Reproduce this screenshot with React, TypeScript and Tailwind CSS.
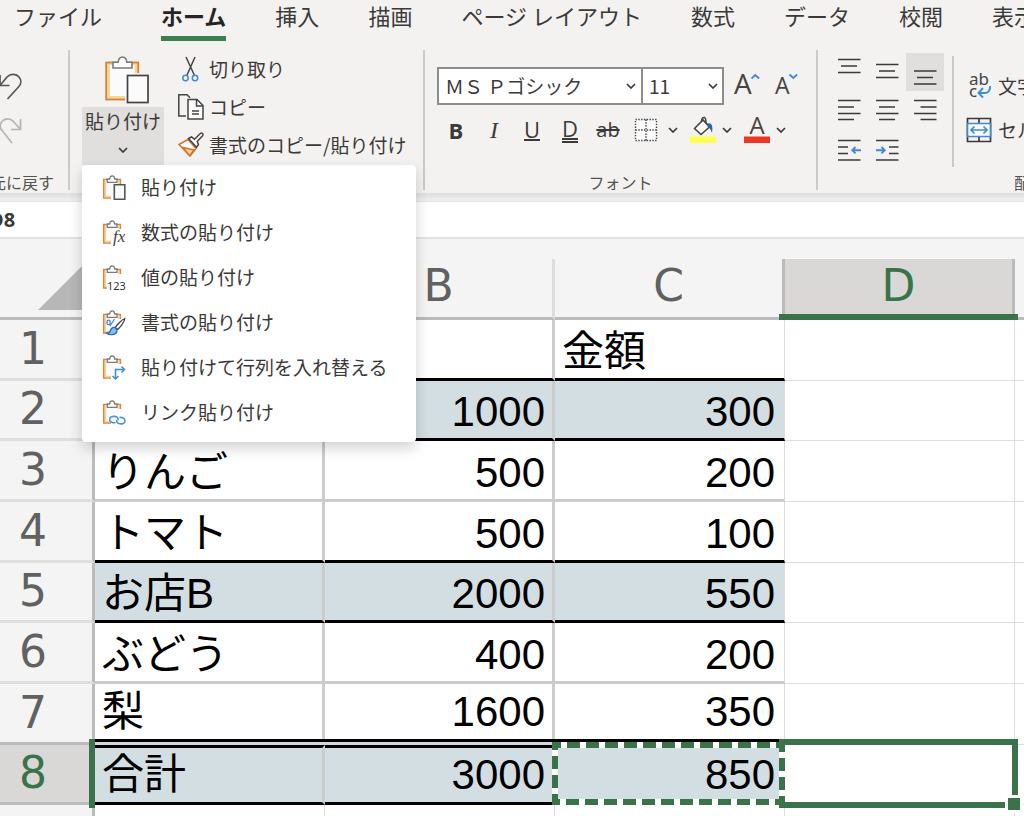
import type { ReactNode } from "react";
import clsx from "clsx";

const TABS = ["ホーム", "挿入", "描画", "ページ レイアウト", "数式", "データ", "校閲", "表示"];

const COLUMNS = [
  { id: "a", label: "" },
  { id: "b", label: "B" },
  { id: "c", label: "C" },
  { id: "d", label: "D" },
  { id: "e", label: "" },
];

type Row = { name: string; price: string; amount: string; kind: "plain" | "shaded" | "total" };

const ROWS: Row[] = [
  { name: "", price: "", amount: "金額", kind: "plain" },
  { name: "", price: "1000", amount: "300", kind: "shaded" },
  { name: "りんご", price: "500", amount: "200", kind: "plain" },
  { name: "トマト", price: "500", amount: "100", kind: "plain" },
  { name: "お店B", price: "2000", amount: "550", kind: "shaded" },
  { name: "ぶどう", price: "400", amount: "200", kind: "plain" },
  { name: "梨", price: "1600", amount: "350", kind: "plain" },
  { name: "合計", price: "3000", amount: "850", kind: "total" },
];

// rows that close with a heavy black rule
const RULED = [1, 2, 4, 5, 8];

function Chevron() {
  return (
    <svg viewBox="0 0 10 6" className="w-[10px] h-[6px]" fill="none" stroke="#3b3a39" strokeWidth="1.7">
      <path d="M1 1l4 4 4-4" />
    </svg>
  );
}

function PasteIcon() {
  return (
    <svg viewBox="0 0 46 50" className="w-[46px] h-[50px]" fill="none">
      <rect x="2.2" y="8.5" width="32" height="37" fill="#f5d898" stroke="#d8803a" strokeWidth="1.8" />
      <rect x="6" y="11" width="24.5" height="31" fill="#fbfbfb" />
      <path d="M21 19h16v30H21z" fill="#f3f2f1" />
      <path d="M21 19h9.5v23H21z" fill="#fbfbfb" />
      <path d="M9 14V8.3h5.2C14.5 5 16 3 18.5 3s4 2 4.3 5.3H28V14z" fill="#fbfbfb" stroke="#7d7b79" strokeWidth="1.6" />
      <rect x="23.5" y="21.5" width="20.5" height="27" fill="#fbfbfb" stroke="#444" strokeWidth="1.7" />
    </svg>
  );
}

function ScissorsIcon() {
  return (
    <svg viewBox="0 0 26 26" className="w-[26px] h-[26px]" fill="none">
      <path d="M8 1l8.5 18.500M17 1L8.800 19.500" stroke="#444" strokeWidth="1.500" />
      <circle cx="7.500" cy="22" r="2.700" stroke="#3f8ad3" strokeWidth="1.500" />
      <circle cx="17" cy="22" r="2.700" stroke="#3f8ad3" strokeWidth="1.500" />
    </svg>
  );
}

function CopyIcon() {
  return (
    <svg viewBox="0 0 26 26" className="w-[26px] h-[26px]" fill="none" stroke="#444" strokeWidth="1.5">
      <path d="M8 22H.8V.8H9l3 3" />
      <path d="M10 5.500h9l6 6V25H10z" fill="#fbfbfb" />
      <path d="M18.500 5.500v6.500H25M14 17h7M14 20h7" />
    </svg>
  );
}

function BrushIcon() {
  return (
    <svg viewBox="0 0 26 26" className="w-[26px] h-[26px]" fill="none">
      <path d="M1 12.500l9-5 8 9-6 7.500z" fill="#fbfbfb" stroke="#d8702e" strokeWidth="1.500" />
      <path d="M5 15.500l11 2.500-4.500 5.500z" fill="#f5d898" stroke="#d8702e" strokeWidth="1.300" />
      <path d="M10.500 6.500l3-1.500 3 2.200L22.300 1.500c1.500-1.200 3.500.6 2.300 2.200L19.200 9.500l1.300 3-2 2.700z" fill="#fbfbfb" stroke="#444" strokeWidth="1.500" />
    </svg>
  );
}

function Clipboard({ children }: { children: ReactNode }) {
  return (
    <svg viewBox="0 0 24 26" className="w-6 h-[26px] shrink-0" fill="none">
      <path d="M4 5.500h13v15H4z" fill="#fafafa" />
      <path d="M5 4.500H1.800v18.500H9M14.500 4.500H18.300V9" stroke="#d9863f" strokeWidth="1.700" />
      <path d="M3.400 5.500v16H9M16.800 5.500V9" stroke="#f5d29a" strokeWidth="1.400" />
      <path d="M5.300 7.300V4h2.400C7.800 1.800 8.700.8 10.200.8s2.400 1 2.500 3.200H15v3.300z" fill="#fff" stroke="#7d7b79" strokeWidth="1.300" />
      {children}
    </svg>
  );
}

const MENU: { label: string; mark: ReactNode }[] = [
  { label: "貼り付け", mark: <path d="M12.300 9.800h10.500v14.400H12.300z" fill="#fafafa" stroke="#555" strokeWidth="1.600" /> },
  {
    label: "数式の貼り付け",
    mark: (
      <text x="11" y="22" fontFamily="Liberation Serif, serif" fontStyle="italic" fontSize="17" fill="#444">
        fx
      </text>
    ),
  },
  {
    label: "値の貼り付け",
    mark: (
      <>
        <path d="M5 15h19v11H5z" fill="#fff" />
        <text x="5" y="25" fontFamily="Noto Sans, sans-serif" fontSize="11" fill="#333">
          123
        </text>
      </>
    ),
  },
  {
    label: "書式の貼り付け",
    mark: (
      <>
        <path d="M12.500 9L8 16M6.600 10.200c1.200 0 1.600 1 1.600 2.200s-.4 2.200-1.600 2.200-1.600-1-1.600-2.200.4-2.200 1.600-2.200z" stroke="#3f8ad3" strokeWidth="1.200" />
        <path d="M22.800 8.500c-3 1-8 6.500-9.500 9l2.200 2c2.500-2 7-7.500 7.300-11z" fill="#fff" stroke="#444" strokeWidth="1.300" />
        <path d="M13 17.500c-3-.5-4 1-4.500 3-.4 1.500-1.500 2.500-4 2.700 2.500 2 9 2.500 10.500-1.700.4-1.500-.5-2.800-2-4z" fill="#8fbbe8" stroke="#2b6cb8" strokeWidth="1.300" />
      </>
    ),
  },
  {
    label: "貼り付けて行列を入れ替える",
    mark: <path d="M13.500 23.500V14.500H22.500M19.500 11.500l3 3-3 3M10.500 21l3 3 3-3" stroke="#3f8ad3" strokeWidth="1.500" />,
  },
  {
    label: "リンク貼り付け",
    mark: (
      <g stroke="#4a94dc" strokeWidth="1.600">
        <path d="M13.500 22.500c-2.500.6-5.800-.3-5.800-3.100s3-3.200 5-3c2.500.2 3.800 1.900 3.300 3.900" />
        <path d="M17.500 17.500c2.500-.5 5.500.6 5.500 3.300s-3 3.300-5 3c-2.500-.3-3.800-1.900-3.200-3.900" />
      </g>
    ),
  },
];

function Lines({ d, arrow }: { d: string; arrow?: string }) {
  return (
    <svg viewBox="0 0 38 38" className="w-[38px] h-[38px]" fill="none" strokeWidth="1.7">
      <path d={d} stroke="#3b3a39" />
      {arrow && <path d={arrow} stroke="#3f8ad3" strokeWidth="1.9" />}
    </svg>
  );
}

const ALIGN = [
  { label: "上揃え", d: "M8 6.500h22.500M11 13h16M8 19.500h22.500" },
  { label: "上下中央揃え", d: "M8 11.500h22.500M11 18h16M8 24.500h22.500" },
  { label: "下揃え", d: "M8 18h22.500M11 24.500h16M8 31h22.500", active: true },
  { label: "左揃え", d: "M8 8.500h22.500M8 15h16M8 21.500h22.500M8 27.500h16" },
  { label: "中央揃え", d: "M8 8.500h22.500M11 15h16M8 21.500h22.500M11 27.500h16" },
  { label: "右揃え", d: "M8 8.500h22.500M14.500 15h16M8 21.500h22.500M14.500 27.500h16" },
  { label: "インデントを減らす", d: "M8 9.500h22.500M8 16h10M8 22.500h10M8 29h22.500", arrow: "M31 19.200h-8.500M25.500 16l-3.200 3.200 3.200 3.200" },
  { label: "インデントを増やす", d: "M8 9.500h22.500M21 16h9.500M21 22.500h9.500M8 29h22.500", arrow: "M8 19.200h8.500M13.500 16l3.200 3.200-3.200 3.200" },
];

function Divider({ className }: { className?: string }) {
  return <div className={clsx("w-[2px] shrink-0 bg-[#cbcac8]", className)} />;
}

function GroupLabel({ children, className }: { children: ReactNode; className?: string }) {
  return <div className={clsx("mt-auto text-base leading-4 text-[#55534f] whitespace-nowrap", className)}>{children}</div>;
}

function FontButton({ label, narrow, children }: { label: string; narrow?: boolean; children: ReactNode }) {
  return (
    <button aria-label={label} className={clsx("h-[38px] flex items-center justify-center", narrow ? "w-8" : "w-[38px]")}>
      {children}
    </button>
  );
}

function MenuArrow({ label }: { label: string }) {
  return (
    <button aria-label={label} className="w-4 h-[38px] flex items-center justify-center">
      <Chevron />
    </button>
  );
}

function FontGroup() {
  return (
    <div className="w-[391px] shrink-0 flex flex-col items-center">
      <div className="w-full pl-3 pt-[17px] flex items-center">
        <div className="flex h-[38px] border-2 border-[#8f8d8b] bg-white">
          <label className="relative flex items-center">
            <select aria-label="フォント" className="appearance-none w-[204px] h-full pl-1.5 text-[19px] leading-6 border-r-2 border-[#8f8d8b]">
              <option>ＭＳ Ｐゴシック</option>
            </select>
            <span className="absolute right-[7px] pointer-events-none flex"><Chevron /></span>
          </label>
          <label className="relative flex items-center">
            <select aria-label="フォント サイズ" className="appearance-none w-[79px] h-full pl-1.5 text-[19px] leading-6">
              <option>11</option>
            </select>
            <span className="absolute right-1 pointer-events-none flex"><Chevron /></span>
          </label>
        </div>
        <button aria-label="フォント サイズの拡大" className="w-[38px] h-[38px] ml-1 flex items-center justify-center">
          <svg viewBox="0 0 32 32" className="w-8 h-8">
            <text x="3" y="24" fontFamily="Open Sans, sans-serif" fontSize="28" fill="#444">A</text>
            <path d="M20.500 8.500l3.800-3.500 3.800 3.500" fill="none" stroke="#3f8ad3" strokeWidth="1.800" />
          </svg>
        </button>
        <button aria-label="フォント サイズの縮小" className="w-[38px] h-[38px] flex items-center justify-center">
          <svg viewBox="0 0 32 32" className="w-8 h-8">
            <text x="6" y="24" fontFamily="Open Sans, sans-serif" fontSize="23" fill="#444">A</text>
            <path d="M20.500 4.500l3.800 3.500 3.800-3.500" fill="none" stroke="#3f8ad3" strokeWidth="1.800" />
          </svg>
        </button>
      </div>
      <div className="w-full pl-3 mt-1.5 flex items-center font-['Open_Sans',sans-serif] text-[22px] leading-6">
        <FontButton label="太字"><b>B</b></FontButton>
        <FontButton label="斜体"><i className="font-['Liberation_Serif',serif] text-2xl leading-6">I</i></FontButton>
        <FontButton label="下線">
          <span className="border-b-2 border-[#3b3a39] leading-5">U</span>
        </FontButton>
        <FontButton label="二重下線">
          <span className="border-b-[5px] border-double border-[#3b3a39] leading-5">D</span>
        </FontButton>
        <FontButton label="取り消し線"><s className="text-xl leading-6">ab</s></FontButton>
        <FontButton label="罫線">
          <svg viewBox="0 0 24 24" className="w-6 h-6" fill="#fbfbfb" stroke="#444" strokeWidth="1.4" strokeDasharray="1.4 1.4">
            <path d="M1.500 1.500h21v21h-21zM12 1.500v21M1.500 12h21" />
          </svg>
        </FontButton>
        <MenuArrow label="罫線のオプション" />
        <span className="w-1.5" />
        <FontButton label="塗りつぶしの色" narrow>
          <svg viewBox="0 0 26 28" className="w-[26px] h-7" fill="none">
            <rect x="0" y="20.500" width="26" height="6.500" fill="#ffff4f" />
            <path d="M4.500 12.500L13 4l6.500 7-8.500 7.500z" fill="#fbfbfb" stroke="#444" strokeWidth="1.600" />
            <path d="M11.500 5.500c0-3 1.500-4.500 3-4s1.500 2.500 1.500 6" stroke="#444" strokeWidth="1.500" />
            <path d="M17.500 7.500c4-1.500 5.800 2 4.500 9.500-1-3-2-5-4.500-6.500z" fill="#2b63b5" />
          </svg>
        </FontButton>
        <MenuArrow label="塗りつぶしのオプション" />
        <span className="w-1.5" />
        <FontButton label="フォントの色" narrow>
          <svg viewBox="0 0 26 28" className="w-[26px] h-7">
            <text x="13" y="18" textAnchor="middle" fontFamily="Open Sans, sans-serif" fontSize="24" fill="#444">A</text>
            <rect x="0" y="20.500" width="26" height="6.500" fill="#ed3524" />
          </svg>
        </FontButton>
        <MenuArrow label="フォントの色のオプション" />
      </div>
      <GroupLabel>フォント</GroupLabel>
    </div>
  );
}

function ClipboardGroup() {
  return (
    <div className="w-[353px] shrink-0 flex pl-3">
      <div className="relative w-[82px] h-[115px] shrink-0">
        <button className="w-full h-full flex flex-col items-center">
          <span className="h-[57px] pt-1 pl-2 flex"><PasteIcon /></span>
          <span className="w-full flex-1 flex flex-col items-center bg-[#e0dfdd] text-[19px] leading-7">
            貼り付け
            <span className="mt-3 flex"><Chevron /></span>
          </span>
        </button>
        <ul className="absolute left-0 top-full z-20 w-[334px] pb-[7px] bg-white rounded-sm shadow-[0_6px_14px_rgba(0,0,0,0.18)]">
          {MENU.map((item) => (
            <li key={item.label}>
              <button className="w-full h-[45px] pl-5 flex items-center gap-[15px] text-[19px] leading-6 whitespace-nowrap">
                <Clipboard>{item.mark}</Clipboard>
                <span className="pb-0.5">{item.label}</span>
              </button>
            </li>
          ))}
        </ul>
      </div>
      <div className="pl-[14px] flex flex-col text-[19px] leading-6 whitespace-nowrap">
        <button className="h-[38px] flex items-center gap-[5px]"><ScissorsIcon />切り取り</button>
        <button className="h-[38px] flex items-center gap-[5px]"><CopyIcon />コピー</button>
        <button className="h-[38px] flex items-center gap-[5px]"><BrushIcon />書式のコピー/貼り付け</button>
      </div>
    </div>
  );
}

function Ribbon() {
  return (
    <div className="relative z-10 flex h-[152px] shrink-0 pt-[9px] pb-[3px] bg-[#f3f2f1]">
      <div className="w-[68px] shrink-0 flex flex-col items-end pr-[14px]">
        <button aria-label="元に戻す" className="mt-[22px] mr-8">
          <svg viewBox="0 0 26 30" className="w-[26px] h-[30px]" fill="none" stroke="#555" strokeWidth="1.7">
            <path d="M4 3v10.500h9.500M4 13.500l7-8.500c4-4 9.500-3 12 0s2.500 7-.5 10L11.500 27" />
          </svg>
        </button>
        <button aria-label="やり直し" className="mt-[14px] mr-8">
          <svg viewBox="0 0 26 30" className="w-[26px] h-[30px]" fill="none" stroke="#b5b4b2" strokeWidth="1.7">
            <path d="M24.500 3v10.500H15M24.500 13.500l-7-8c-4-4-9-3-11.500 0s-2.500 6.500.5 9.500L16 27" />
          </svg>
        </button>
        <GroupLabel>元に戻す</GroupLabel>
      </div>
      <Divider />
      <ClipboardGroup />
      <Divider />
      <FontGroup />
      <Divider />
      <div className="w-[134px] shrink-0 pl-3 pt-[3px]">
        <div className="grid grid-cols-3 gap-y-px w-[114px]">
          {ALIGN.map((a) => (
            <button key={a.label} aria-label={a.label} className={clsx("w-[38px] h-[38px]", a.active && "bg-[#e0dfdd]")}>
              <Lines d={a.d} arrow={a.arrow} />
            </button>
          ))}
        </div>
      </div>
      <Divider className="mt-1.5 mb-[23px]" />
      <div className="flex flex-col pl-3 pt-[14px] text-[19px] leading-6 whitespace-nowrap">
        <button className="h-11 flex items-center gap-1.5">
          <svg viewBox="0 0 26 28" className="w-[26px] h-7 shrink-0" fill="none">
            <text x="3" y="13" fontFamily="Noto Sans, sans-serif" fontSize="17" fill="#444">ab</text>
            <text x="3" y="25" fontFamily="Noto Sans, sans-serif" fontSize="17" fill="#444">c</text>
            <path d="M24 14c.5 4-1.500 7-5 7h-6M17 16l-4.500 5 4.500 4.500" stroke="#3f8ad3" strokeWidth="1.900" />
          </svg>
          文字列の折り返し
        </button>
        <button className="h-11 flex items-center gap-1.5">
          <svg viewBox="0 0 26 26" className="w-[26px] h-[26px] shrink-0" fill="none" strokeWidth="1.7">
            <path d="M1.500 1.500h23v23h-23zM13 1.500v5M13 19.500v5" stroke="#3b3a39" />
            <path d="M1.500 6.500h23v13h-23z" fill="#fbfbfb" stroke="#3f8ad3" />
            <path d="M5 13h16M8.500 9.500L5 13l3.500 3.500M17.500 9.500L21 13l-3.500 3.500" stroke="#3f8ad3" />
          </svg>
          セルの結合
        </button>
        <GroupLabel className="pl-12">配置</GroupLabel>
      </div>
    </div>
  );
}

// dashed outline round the cell that was copied
function CopyOutline() {
  return (
    <svg className="absolute -left-[3px] -top-[6px] w-[233px] h-[63px] z-[2]" fill="none" strokeWidth="6">
      <rect x="3" y="3" width="227" height="57" stroke="#fff" />
      <rect x="3" y="3" width="227" height="57" stroke="#3a734a" strokeDasharray="13 6" strokeDashoffset="7" />
    </svg>
  );
}

function ActiveOutline() {
  return (
    <>
      <span className="absolute -left-[6px] -top-[6px] -right-[4px] -bottom-[4px] border-y-[6px] border-r-[6px] border-[#3a734a]" />
      <span className="absolute -right-[9px] -bottom-[9px] w-[18px] h-[18px] border-[3px] border-white bg-[#3a734a] z-[3]" />
    </>
  );
}

function Sheet() {
  return (
    <table className="table-fixed w-[1245px] border-separate border-spacing-0 bg-white">
      <colgroup>
        <col className="w-[95px]" />
        {COLUMNS.map((c) => <col key={c.id} className="w-[230px]" />)}
      </colgroup>
      <thead className="font-['DejaVu_Sans',sans-serif] text-[44px] leading-none text-[#616161]">
        <tr>
          <th className="h-[61px] p-0 bg-[#f4f4f4] border-b-[3px] border-[#bbbbbb]">
            <svg viewBox="0 0 95 58" className="block w-[95px] h-[58px]">
              <path d="M38 51L88 1v50z" fill="#b7b7b7" />
            </svg>
          </th>
          {COLUMNS.map((c) => (
            <th
              key={c.id}
              scope="col"
              className={clsx(
                "relative h-[61px] p-0 pb-1 font-normal border-b-[3px] border-b-[#bbbbbb] border-r-[3px]",
                c.id === "d" ? "bg-[#d9d8d6] text-[#3a734a]" : "bg-[#f4f4f4]",
                c.id === "c" || c.id === "d" ? "border-r-[#bbbbbb]" : "border-r-[#dddddd]"
              )}
            >
              {c.label}
              {c.id === "d" && <span className="absolute -left-[6px] -right-[6px] -bottom-[3px] h-[6px] bg-[#3a734a] z-[3]" />}
            </th>
          ))}
        </tr>
      </thead>
      <tbody className="font-['Liberation_Sans','Noto_Sans_CJK_JP',sans-serif] text-[42px] leading-none text-black">
        {ROWS.map((row, i) => {
          const n = i + 1;
          const total = row.kind === "total";
          const cell = clsx(
            "relative p-0 px-[7px] whitespace-nowrap",
            n === 2 || n === 5 || n === 8 ? "h-[60px]" : "h-[61px]",
            n < 7 && "pt-[5px]",
            n === 7 && "pb-[3px]",
            row.kind !== "plain" && "bg-[#d3dee2]",
            total && "border-t-[3px] border-t-black shadow-[0_-3px_0_#d3d7e0,0_-6px_0_#000]",
            "border-b-[3px]",
            RULED.includes(n) ? "border-b-black" : "border-b-[#cccccc]"
          );
          return (
            <tr key={n}>
              <th
                scope="row"
                className={clsx(
                  "relative p-0 pr-[45px] pb-px text-right font-normal font-['DejaVu_Sans',sans-serif] text-[44px] border-r-[3px] border-r-[#bbbbbb] border-b-[3px]",
                  total ? "bg-[#d9d8d6] text-[#3a734a]" : "bg-[#f4f4f4] text-[#616161]",
                  n >= 7 ? "border-b-[#bbbbbb]" : "border-b-[#dedede]"
                )}
              >
                {n}
                {total && <span className="absolute -right-[3px] -top-[6px] -bottom-[6px] w-[6px] bg-[#3a734a] z-[3]" />}
              </th>
              <td className={clsx(cell, "border-r-[3px] border-r-[#cccccc]")}>{row.name}</td>
              <td className={clsx(cell, "border-r-[3px] border-r-[#cccccc] text-right")}>{row.price}</td>
              <td className={clsx(cell, "pr-[9px] border-r border-r-[#dcdcdc]", n > 1 && "text-right")}>
                {row.amount}
                {total && <CopyOutline />}
              </td>
              <td className="relative p-0 border-r border-b border-[#dedede]">{total && <ActiveOutline />}</td>
              <td className="p-0 border-r border-b border-[#dedede]" />
            </tr>
          );
        })}
        <tr>
          <th scope="row" className="h-[61px] p-0 pr-[45px] pb-px text-right font-normal font-['DejaVu_Sans',sans-serif] text-[44px] bg-[#f4f4f4] text-[#616161] border-r-[3px] border-r-[#bbbbbb]">
            9
          </th>
          {COLUMNS.map((c) => <td key={c.id} className="border-r border-b border-[#dedede]" />)}
        </tr>
      </tbody>
    </table>
  );
}

export default function App() {
  return (
    <div className="h-screen w-full overflow-hidden flex flex-col bg-[#f4f4f4] text-[#3b3a39] font-['Noto_Sans_CJK_JP',sans-serif]">
      <nav className="h-[41px] shrink-0 flex gap-[49px] pl-[14px] bg-[#f3f2f1] text-[22px] leading-[30px] whitespace-nowrap">
        <a href="#file" className="mr-[10px]">ファイル</a>
        {TABS.map((tab) => (
          <a
            key={tab}
            href="#tab"
            className={clsx(tab === "ホーム" && "font-bold text-[#252423] border-b-[5px] border-[#38804c]")}
          >
            {tab}
          </a>
        ))}
      </nav>
      <Ribbon />
      <div className="h-[9px] shrink-0 bg-gradient-to-b from-[#dededd] to-[#f1f1f1] border-b border-[#e4e4e4]" />
      <div className="h-[37px] shrink-0 flex items-center bg-white border-b-2 border-[#e3e3e3]">
        <input
          aria-label="名前ボックス"
          defaultValue="D8"
          className="w-10 -ml-[11px] text-xl leading-6 font-bold font-['Noto_Sans',sans-serif] bg-transparent"
        />
      </div>
      <div className="mt-5 flex-1 min-h-0">
        <Sheet />
      </div>
    </div>
  );
}
